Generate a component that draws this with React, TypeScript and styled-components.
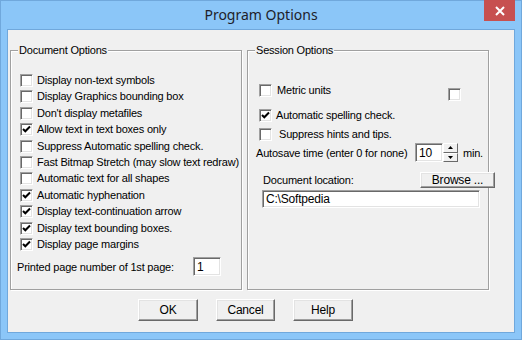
import styled, { createGlobalStyle } from "styled-components";

const GlobalStyle = createGlobalStyle`
  html, body {
    margin: 0;
    padding: 0;
    background: #8bc6f8;
  }
  body {
    font-family: "Liberation Sans", Arial, sans-serif;
    font-size: 11px;
    color: #000;
  }
`;

const Window = styled.div`
  width: 522px;
  height: 340px;
  box-sizing: border-box;
  background: #8bc6f8;
  border: 1px solid #70a8dc;
  display: flex;
  flex-direction: column;
  position: relative;
`;

const TitleBar = styled.div`
  height: 28px;
  display: flex;
  align-items: center;
  justify-content: center;
  font-family: "Noto Sans", "Open Sans", sans-serif;
  font-size: 14px;
  color: #1e1e2a;
  padding-bottom: 1px;
  box-sizing: border-box;
`;

const CloseButton = styled.div`
  position: absolute;
  top: -1px;
  right: 6px;
  width: 31px;
  height: 21px;
  background: #c75050;
  display: flex;
  align-items: center;
  justify-content: center;
`;

const Client = styled.div`
  flex: 1;
  margin: 0 6px 6px;
  border: 1px solid #70a8dc;
  background: #f0f0f0;
  padding: 20px 0 0 2px;
  display: flex;
  flex-direction: column;
`;

const Groups = styled.div`
  display: flex;
  gap: 5px;
`;

const Group = styled.div<{ $w: number }>`
  width: ${(p) => p.$w}px;
  height: 240px;
  box-sizing: border-box;
  border: 1px solid #a0a0a0;
  box-shadow: 1px 1px 0 #fff, inset 1px 1px 0 #fff;
  display: flex;
  flex-direction: column;
`;

const Legend = styled.div`
  align-self: flex-start;
  margin: -7px 0 0 7px;
  padding: 0 1px;
  height: 13px;
  line-height: 13px;
  background: #f0f0f0;
  letter-spacing: -0.2px;
`;

const CheckList = styled.div`
  margin-top: 17px;
  padding-left: 9px;
  display: flex;
  flex-direction: column;
`;

const Row = styled.div<{ $h?: number; $pad?: number }>`
  height: ${(p) => p.$h ?? 16.4}px;
  display: flex;
  align-items: flex-start;
  padding-left: ${(p) => p.$pad ?? 0}px;
`;

const Box = styled.span<{ $top?: number }>`
  width: 13px;
  height: 13px;
  box-sizing: border-box;
  flex: none;
  background: #fff;
  border: 1px solid;
  border-color: #a0a0a0 #fff #fff #a0a0a0;
  box-shadow: inset 1px 1px 0 #696969, inset -1px -1px 0 #e3e3e3;
  margin-top: ${(p) => p.$top ?? 0}px;
  display: flex;
  align-items: center;
  justify-content: center;
`;

const Label = styled.span<{ $gap?: number }>`
  margin-left: ${(p) => p.$gap ?? 4}px;
  line-height: 13px;
  letter-spacing: -0.2px;
  white-space: nowrap;
`;

const Text = styled.span<{ $w?: number }>`
  width: ${(p) => (p.$w ? `${p.$w}px` : "auto")};
  flex: none;
  letter-spacing: -0.2px;
  white-space: nowrap;
`;

const Field = styled.div<{ $w: number; $h: number }>`
  width: ${(p) => p.$w}px;
  height: ${(p) => p.$h}px;
  box-sizing: border-box;
  background: #fff;
  border: 1px solid;
  border-color: #a0a0a0 #fff #fff #a0a0a0;
  box-shadow: inset 1px 1px 0 #696969, inset -1px -1px 0 #e3e3e3;
  font-size: 12px;
  padding: 0 0 0 3px;
  display: flex;
  align-items: center;
  letter-spacing: -0.2px;
`;

const PageRow = styled.div`
  margin-top: 3px;
  padding-left: 6px;
  display: flex;
  align-items: center;
`;

const SessionList = styled.div`
  margin-top: 27px;
  padding-left: 11px;
  display: flex;
  flex-direction: column;
`;

const Spacer = styled.span<{ $w?: number }>`
  flex: ${(p) => (p.$w ? `0 0 ${p.$w}px` : "1")};
`;

const AutoRow = styled.div`
  margin-top: 2px;
  padding-left: 8px;
  display: flex;
  align-items: center;
`;

const Spinner = styled.div`
  width: 15px;
  height: 19px;
  display: flex;
  flex-direction: column;
  margin-right: 5px;
`;

const SpinHalf = styled.div`
  flex: 1;
  box-sizing: border-box;
  background: #f0f0f0;
  border: 1px solid;
  border-color: #fff #696969 #696969 #fff;
  display: flex;
  align-items: center;
  justify-content: center;
`;

const DocBlock = styled.div`
  margin-top: 10px;
  padding-left: 14px;
  width: 233px;
  display: flex;
  flex-direction: column;
  gap: 2px;
`;

const DocHead = styled.div`
  display: flex;
  align-items: center;
  justify-content: space-between;
  padding-left: 1px;
`;

const Button = styled.div<{ $w: number; $h: number }>`
  width: ${(p) => p.$w}px;
  height: ${(p) => p.$h}px;
  box-sizing: border-box;
  background: #f0f0f0;
  border: 1px solid;
  border-color: #fff #696969 #696969 #fff;
  box-shadow: inset -1px -1px 0 #a0a0a0, inset 1px 1px 0 #e3e3e3;
  display: flex;
  align-items: center;
  justify-content: center;
  font-size: 12px;
  letter-spacing: -0.2px;
`;

const ButtonRow = styled.div`
  margin-top: 9px;
  padding-left: 128px;
  display: flex;
  gap: 18px;
`;

function Check({ on, top }: { on?: boolean; top?: number }) {
  return (
    <Box $top={top}>
      {on && (
        <svg width="9" height="9" viewBox="0 0 9 9">
          <path d="M1 4 L3.3 6.3 L8 1.5" stroke="#000" strokeWidth="2" fill="none" />
        </svg>
      )}
    </Box>
  );
}

const docOptions: [string, boolean][] = [
  ["Display non-text symbols", false],
  ["Display Graphics bounding box", false],
  ["Don't display metafiles", false],
  ["Allow text in text boxes only", true],
  ["Suppress Automatic spelling check.", false],
  ["Fast Bitmap Stretch (may slow text redraw)", false],
  ["Automatic text for all shapes", false],
  ["Automatic hyphenation", true],
  ["Display text-continuation arrow", true],
  ["Display text bounding boxes.", true],
  ["Display page margins", true],
];

export default function App() {
  return (
    <>
      <GlobalStyle />
      <Window>
        <TitleBar>Program Options</TitleBar>
        <CloseButton>
          <svg width="10" height="10" viewBox="0 0 10 10">
            <path d="M1 1 L9 9 M9 1 L1 9" stroke="#fff" strokeWidth="2" />
          </svg>
        </CloseButton>
        <Client>
          <Groups>
            <Group $w={232}>
              <Legend>Document Options</Legend>
              <CheckList>
                {docOptions.map(([label, on]) => (
                  <Row key={label}>
                    <Check on={on} />
                    <Label>{label}</Label>
                  </Row>
                ))}
              </CheckList>
              <PageRow>
                <Text $w={176}>Printed page number of 1st page:</Text>
                <Field $w={28} $h={19}>1</Field>
              </PageRow>
            </Group>
            <Group $w={242}>
              <Legend>Session Options</Legend>
              <SessionList>
                <Row $h={25}>
                  <Check />
                  <Label $gap={5}>Metric units</Label>
                  <Spacer />
                  <Check top={4} />
                  <Spacer $w={27} />
                </Row>
                <Row $h={19}>
                  <Check on />
                  <Label>Automatic spelling check.</Label>
                </Row>
                <Row $h={13}>
                  <Check />
                  <Label $gap={7}>Suppress hints and tips.</Label>
                </Row>
              </SessionList>
              <AutoRow>
                <Text $w={159}>Autosave time (enter 0 for none)</Text>
                <Field $w={28} $h={19}>10</Field>
                <Spinner>
                  <SpinHalf>
                    <svg width="5" height="3" viewBox="0 0 5 3">
                      <path d="M2.5 0 L5 3 L0 3 Z" fill="#000" />
                    </svg>
                  </SpinHalf>
                  <SpinHalf>
                    <svg width="5" height="3" viewBox="0 0 5 3">
                      <path d="M0 0 L5 0 L2.5 3 Z" fill="#000" />
                    </svg>
                  </SpinHalf>
                </Spinner>
                <Text>min.</Text>
              </AutoRow>
              <DocBlock>
                <DocHead>
                  <Text>Document location:</Text>
                  <Button $w={75} $h={16}>Browse ...</Button>
                </DocHead>
                <Field $w={218} $h={18}>C:\Softpedia</Field>
              </DocBlock>
            </Group>
          </Groups>
          <ButtonRow>
            <Button $w={60} $h={22}>OK</Button>
            <Button $w={59} $h={22}>Cancel</Button>
            <Button $w={60} $h={22}>Help</Button>
          </ButtonRow>
        </Client>
      </Window>
    </>
  );
}
